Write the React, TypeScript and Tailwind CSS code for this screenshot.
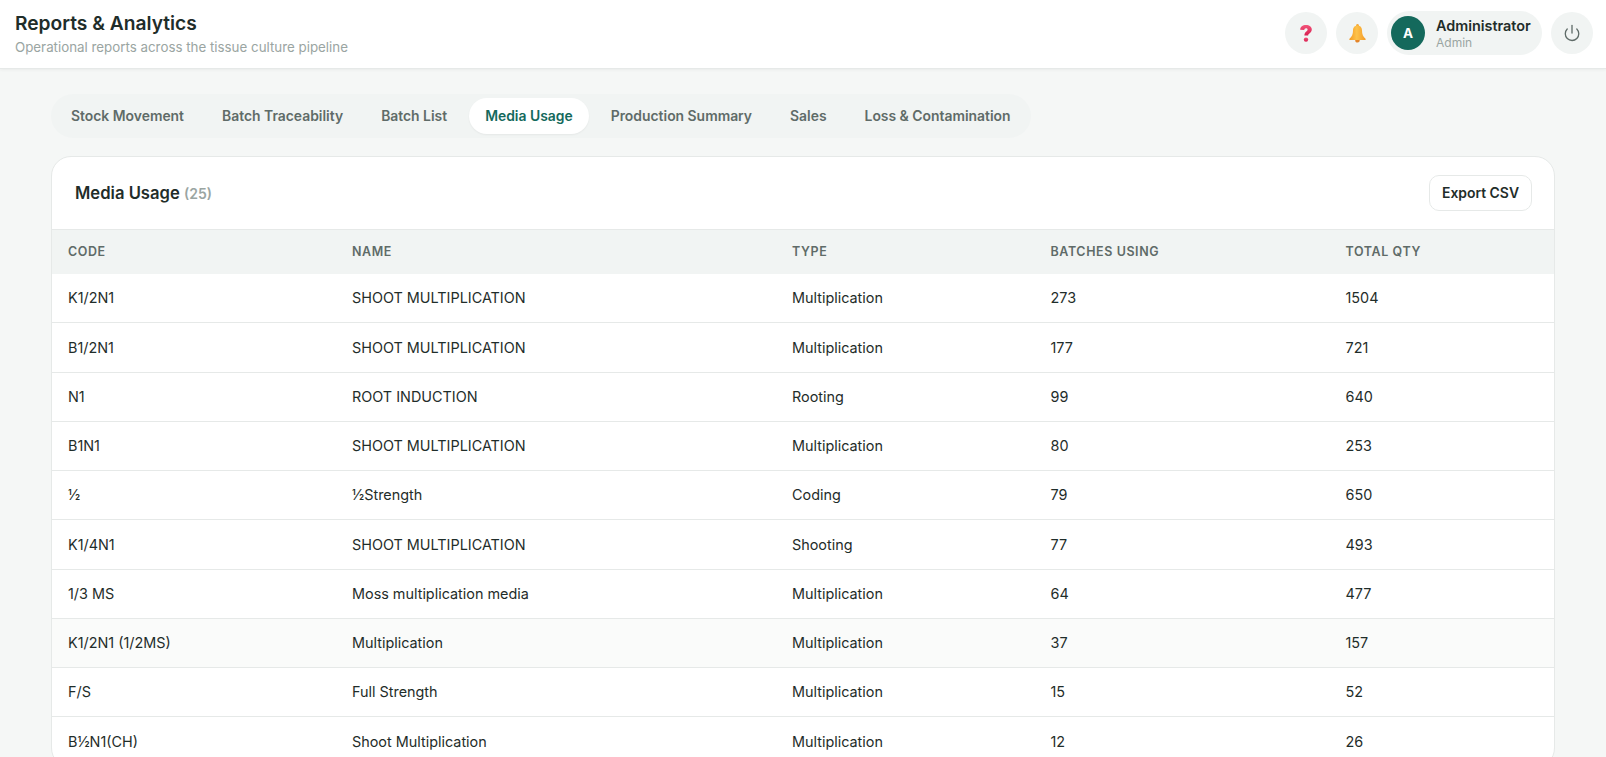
import { Power } from "lucide-react";

const tabs = ["Stock Movement", "Batch Traceability", "Batch List", "Media Usage", "Production Summary", "Sales", "Loss & Contamination"];

const rows = [
  ["K1/2N1", "SHOOT MULTIPLICATION", "Multiplication", "273", "1504"],
  ["B1/2N1", "SHOOT MULTIPLICATION", "Multiplication", "177", "721"],
  ["N1", "ROOT INDUCTION", "Rooting", "99", "640"],
  ["B1N1", "SHOOT MULTIPLICATION", "Multiplication", "80", "253"],
  ["½", "½Strength", "Coding", "79", "650"],
  ["K1/4N1", "SHOOT MULTIPLICATION", "Shooting", "77", "493"],
  ["1/3 MS", "Moss multiplication media", "Multiplication", "64", "477"],
  ["K1/2N1 (1/2MS)", "Multiplication", "Multiplication", "37", "157"],
  ["F/S", "Full Strength", "Multiplication", "15", "52"],
  ["B½N1(CH)", "Shoot Multiplication", "Multiplication", "12", "26"],
];

const gridCols = "grid grid-cols-[284px_440px_258.5px_295px_1fr]";

function QuestionIcon() {
  return (
    <svg viewBox="0 0 12 17" className="h-[17px] w-[12px]">
      <defs>
        <linearGradient id="q" x1="0" y1="0" x2="0" y2="1">
          <stop offset="0" stopColor="#f2557a" />
          <stop offset="1" stopColor="#d81e50" />
        </linearGradient>
      </defs>
      <path d="M0.2 4.8C0.2 2 2.6 0 6 0s5.8 1.9 5.800 4.500c0 2-1.200 3-2.400 3.900-.9.600-1.200 1-1.200 2.100H4.400c0-2 .6-3 1.900-4 .9-.7 1.300-1.100 1.300-1.900 0-.9-.7-1.400-1.600-1.400-1 0-1.700.7-1.700 1.800z" fill="url(#q)" />
      <circle cx="6" cy="14.600" r="2.200" fill="url(#q)" />
    </svg>
  );
}

function BellIcon() {
  return (
    <svg viewBox="0 0 17 19" className="h-[19px] w-[17px]">
      <defs>
        <linearGradient id="b" x1="0" y1="0" x2="1" y2="0">
          <stop offset="0" stopColor="#f49a22" />
          <stop offset="0.45" stopColor="#fdc24a" />
          <stop offset="1" stopColor="#f39a28" />
        </linearGradient>
      </defs>
      <circle cx="8.500" cy="1.500" r="1.500" fill="#f3a433" />
      <path d="M8.500 1.500c-3 0-4.500 2.300-4.500 5 0 3.900-1 6-3.500 8.300-.5.500-.3 1.200.4 1.200h15.200c.7 0 .9-.7.400-1.200C14 12.500 13 10.400 13 6.500c0-2.700-1.500-5-4.500-5z" fill="url(#b)" />
      <path d="M6.200 16a2.300 2.600 0 0 0 4.600 0z" fill="#e5862a" />
    </svg>
  );
}

export default function App() {
  return (
    <div className="h-[757px] overflow-hidden bg-[#f5f7f6] font-['Inter',sans-serif] text-[#1f2d2a]">
      <header className="flex h-[69px] items-center justify-between border-b border-[#e6e9e8] bg-white pr-[13px] pb-[2px] pl-[15px] shadow-[0_1px_3px_rgba(0,0,0,0.05)]">
        <div>
          <h1 className="text-[19.2px] leading-[24px] font-semibold">Reports &amp; Analytics</h1>
          <p className="mt-[3px] text-[13.33px] leading-[18px] text-[#9aa5a2]">Operational reports across the tissue culture pipeline</p>
        </div>
        <div className="flex items-center gap-[9px]">
          <button className="flex h-[42px] w-[42px] items-center justify-center rounded-full bg-[#f1f4f3]">
            <QuestionIcon />
          </button>
          <button className="flex h-[42px] w-[42px] items-center justify-center rounded-full bg-[#f1f4f3]">
            <BellIcon />
          </button>
          <div className="flex h-[44px] w-[155px] items-center gap-[11px] rounded-full bg-[#f1f4f3] pl-[4px]">
            <div className="flex h-[34px] w-[34px] items-center justify-center rounded-full bg-[#14695c] text-[13.5px] font-bold text-white">A</div>
            <div>
              <div className="text-[14.4px] leading-[18px] font-semibold">Administrator</div>
              <div className="text-[12px] leading-[15px] text-[#9aa5a2]">Admin</div>
            </div>
          </div>
          <button className="flex h-[42px] w-[42px] items-center justify-center rounded-full bg-[#f1f4f3] text-[#5f6b68]">
            <Power size={18} strokeWidth={1.75} />
          </button>
        </div>
      </header>

      <main className="px-[51px] pt-[25px]">
        <nav className="flex w-fit items-center gap-[6px] rounded-full bg-[#f1f4f3] p-[4px]">
          {tabs.map((tab) => (
            <button
              key={tab}
              className={
                tab === "Media Usage"
                  ? "h-[36px] rounded-full bg-white px-4 text-[13.9px] font-semibold text-[#14695c] shadow-[0_1px_2px_rgba(0,0,0,0.05)]"
                  : "h-[36px] rounded-full px-4 text-[13.9px] font-semibold text-[#5f6b68]"
              }
            >
              {tab}
            </button>
          ))}
        </nav>

        <section className="mt-[18px] overflow-hidden rounded-[20px] border border-[#e6e9e8] bg-white">
          <div className="flex h-[72px] items-center justify-between px-[22px]">
            <h2 className="pl-px text-[16.64px] font-semibold">
              Media Usage <span className="text-[14px] font-semibold text-[#9aa5a2]">(25)</span>
            </h2>
            <button className="h-[36px] w-[103px] rounded-[10px] border border-[#e6e9e8] bg-white text-[13.9px] font-semibold">Export CSV</button>
          </div>
          <div className={`${gridCols} h-[45px] items-center border-t border-[#e6e9e8] bg-[#f1f4f3] pl-[16px] text-[12.48px] font-semibold tracking-[0.6px] text-[#5f6b68]`}>
            <div>CODE</div>
            <div>NAME</div>
            <div>TYPE</div>
            <div>BATCHES USING</div>
            <div>TOTAL QTY</div>
          </div>
          {rows.map((row, i) => (
            <div
              key={row[0]}
              className={`${gridCols} h-[49.25px] items-center border-b border-[#e6e9e8] pl-[16px] text-[14.4px] ${i === 7 ? "bg-[#fafbfa]" : ""}`}
            >
              {row.map((cell, j) => (
                <div key={j}>{cell}</div>
              ))}
            </div>
          ))}
        </section>
      </main>
    </div>
  );
}
